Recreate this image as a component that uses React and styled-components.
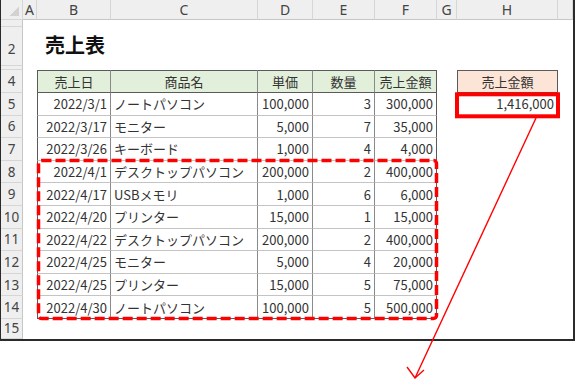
import React from 'react';
import styled, { createGlobalStyle } from 'styled-components';

const GlobalStyle = createGlobalStyle`
  body {
    margin: 0;
    background: #ffffff;
    font-family: "Noto Sans CJK JP", "Noto Sans", sans-serif;
  }
`;

const Colors = {
  text: '#333333',
  head: '#efefef',
  headLine: '#d6d6d6',
  green: '#e2efda',
  orange: '#fce4d6',
  vLine: '#8a8a8a',
  hLine: '#c4c4c4',
  outer: '#5a5a5a',
  red: '#ff0000',
};

const COLS = ['A', 'B', 'C', 'D', 'E', 'F', 'G', 'H', 'I'];
const TABLE_COLS = ['B', 'C', 'D', 'E', 'F'];
const ALIGN = { B: 'right', C: 'left', D: 'right', E: 'right', F: 'right' };

const sales = [
  ['2022/3/1', 'ノートパソコン', '100,000', '3', '300,000'],
  ['2022/3/17', 'モニター', '5,000', '7', '35,000'],
  ['2022/3/26', 'キーボード', '1,000', '4', '4,000'],
  ['2022/4/1', 'デスクトップパソコン', '200,000', '2', '400,000'],
  ['2022/4/17', 'USBメモリ', '1,000', '6', '6,000'],
  ['2022/4/20', 'プリンター', '15,000', '1', '15,000'],
  ['2022/4/22', 'デスクトップパソコン', '200,000', '2', '400,000'],
  ['2022/4/25', 'モニター', '5,000', '4', '20,000'],
  ['2022/4/25', 'プリンター', '15,000', '5', '75,000'],
  ['2022/4/30', 'ノートパソコン', '100,000', '5', '500,000'],
];

// row 1 and row 3 are squeezed almost shut in the sheet
const rows = [
  { n: 1, h: 7, pad: 0, label: '' },
  { n: 2, h: 39, pad: 14, label: '2' },
  { n: 3, h: 4, pad: 0, label: '' },
  { n: 4, h: 23, pad: 0, label: '4' },
  ...sales.map((_, i) => ({ n: 5 + i, h: 22.6, pad: 0, label: String(5 + i) })),
  { n: 15, h: 20, pad: 0, label: '15' },
];

function tableCell(row, col) {
  if (row === 4 && TABLE_COLS.includes(col)) {
    const labels = { B: '売上日', C: '商品名', D: '単価', E: '数量', F: '売上金額' };
    return { text: labels[col], align: 'center', bg: Colors.green };
  }
  if (row >= 5 && row <= 14 && TABLE_COLS.includes(col)) {
    const data = sales[row - 5];
    return { text: data[TABLE_COLS.indexOf(col)], align: ALIGN[col] };
  }
  if (col === 'H' && row === 4) return { text: '売上金額', align: 'center', bg: Colors.orange, single: true };
  if (col === 'H' && row === 5) return { text: '1,416,000', align: 'right', single: true };
  return null;
}

export default function App() {
  return (
    <Frame>
      <GlobalStyle />
      <Sheet $rows={rows.map((r) => `${r.h}px`).join(' ')}>
        <Corner />
        {COLS.map((c) => (
          <ColHead key={c}>{c === 'I' ? '' : c}</ColHead>
        ))}
        {rows.map((r) => (
          <React.Fragment key={r.n}>
            <RowHead $pad={r.pad}>{r.label}</RowHead>
            {COLS.map((c) => {
              if (r.n === 2 && c === 'B') return <Title key={c}>売上表</Title>;
              const cell = tableCell(r.n, c);
              if (!cell) return <Blank key={c} />;
              return (
                <Cell
                  key={c}
                  $align={cell.align}
                  $bg={cell.bg}
                  $single={cell.single}
                  $first={c === 'B'}
                  $last={c === 'F'}
                  $top={r.n === 4}
                  $head={r.n === 4}
                  $bottom={r.n === 14}
                >
                  {cell.text}
                </Cell>
              );
            })}
          </React.Fragment>
        ))}
      </Sheet>
      <Overlay width="575" height="389" viewBox="0 0 575 389">
        <rect x="38.5" y="160.5" width="398" height="158" rx="3" fill="none" stroke={Colors.red} strokeWidth="3.5" strokeDasharray="10 4" />
        <rect x="457" y="94.3" width="101" height="22" fill="none" stroke={Colors.red} strokeWidth="4" />
        <line x1="536" y1="118" x2="415" y2="378" stroke={Colors.red} strokeWidth="1.4" />
        <polyline points="407,367 415,378 424,370" fill="none" stroke={Colors.red} strokeWidth="1.4" />
      </Overlay>
    </Frame>
  );
}

const Frame = styled.div`
  position: relative;
  width: 575px;
  height: 389px;
  overflow: hidden;
  background: #ffffff;
`;

const Sheet = styled.div`
  display: grid;
  width: 575px;
  height: 341px;
  box-sizing: border-box;
  border-left: 1px solid #2b2b2b;
  border-right: 2px solid #2b2b2b;
  border-bottom: 2px solid #2b2b2b;
  grid-template-columns: 22px 14px 74px 147px 55px 62px 62px 20px 101px 1fr;
  grid-template-rows: 20px ${({ $rows }) => $rows} 1fr;
  color: ${Colors.text};
  font-size: 13px;
`;

const Corner = styled.div`
  background:
    linear-gradient(135deg, transparent 62%, #d2d2d2 62%) no-repeat right 3px bottom 3px / 12px 12px,
    ${Colors.head};
  border-right: 1px solid ${Colors.headLine};
  border-bottom: 1px solid ${Colors.headLine};
`;

const ColHead = styled.div`
  display: flex;
  align-items: center;
  justify-content: center;
  background: ${Colors.head};
  border-right: 1px solid ${Colors.headLine};
  border-bottom: 1px solid #c6c6c6;
  font-family: "Noto Sans", sans-serif;
  font-size: 14px;
  color: #444;
`;

const RowHead = styled.div`
  display: flex;
  justify-content: center;
  align-items: ${({ $pad }) => ($pad ? 'flex-start' : 'center')};
  padding-top: ${({ $pad }) => $pad}px;
  box-sizing: border-box;
  overflow: hidden;
  background: ${Colors.head};
  border-right: 1px solid #c6c6c6;
  border-bottom: 1px solid ${Colors.headLine};
  font-family: "Noto Sans", sans-serif;
  font-size: 13.5px;
  line-height: 16px;
  color: #444;
`;

const Blank = styled.div``;

const Title = styled.div`
  display: flex;
  align-items: center;
  padding: 0 0 4px 8px;
  white-space: nowrap;
  font-size: 20px;
  font-weight: 700;
  color: #111;
`;

const Cell = styled.div`
  display: flex;
  align-items: center;
  justify-content: ${({ $align }) =>
    $align === 'right' ? 'flex-end' : $align === 'center' ? 'center' : 'flex-start'};
  padding: 0 3px;
  box-sizing: border-box;
  white-space: nowrap;
  overflow: hidden;
  background: ${({ $bg }) => $bg || '#ffffff'};
  border-right: 1px solid ${({ $last, $single }) => ($last || $single ? Colors.outer : Colors.vLine)};
  border-bottom: 1px solid
    ${({ $head, $bottom, $single }) => ($head || $bottom || $single ? Colors.outer : Colors.hLine)};
  ${({ $first, $single }) => ($first || $single ? `border-left: 1px solid ${Colors.outer};` : '')}
  ${({ $top }) => ($top ? `border-top: 1px solid ${Colors.outer};` : '')}
`;

const Overlay = styled.svg`
  position: absolute;
  left: 0;
  top: 0;
  pointer-events: none;
`;
